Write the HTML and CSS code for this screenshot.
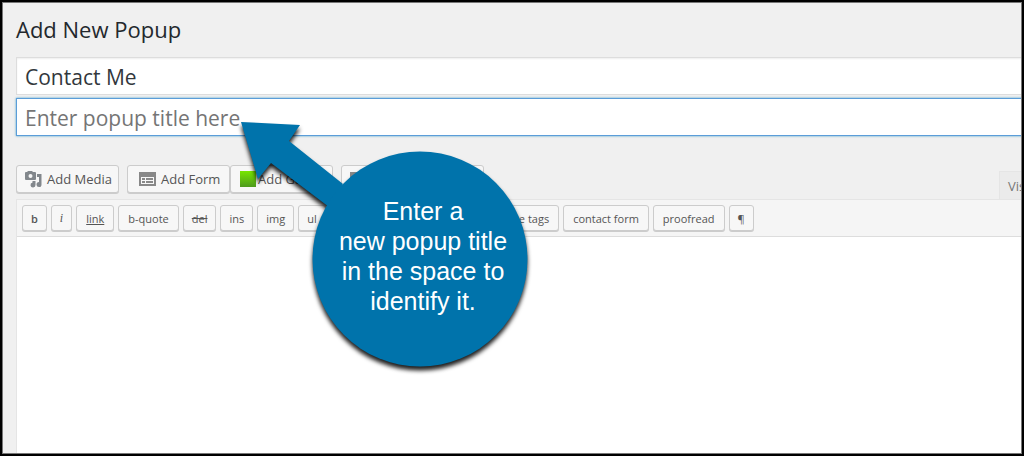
FILE: index.html
```html
<!DOCTYPE html>
<html lang="en">
<head>
<meta charset="utf-8">
<title>Add New Popup</title>
<link rel="stylesheet" href="styles.css">
</head>
<body>
<div class="frame">
  <main class="editor-page">
    <h1 class="page-title">Add New Popup</h1>
    <form class="popup-form">
      <input class="title-field" type="text" aria-label="Popup name" value="Contact Me">
      <input class="title-field title-field--active" type="text" aria-label="Popup title" placeholder="Enter popup title here">
      <div class="media-row">
        <div class="media-buttons">
          <button class="btn btn--media btn--spaced" type="button">
            <svg class="icon" viewBox="0 0 18 18" aria-hidden="true"><path fill="#82878c" fill-rule="evenodd" d="M2 2h1l1-1h4l1 1h2q1 0 1 1v6q0 1-1 1H2q-1 0-1-1V3q0-1 1-1zm4.500 2a2 2 0 1 0 0 4a2 2 0 1 0 0-4z"/><path fill="#82878c" d="M13 4h4.500v10.500a2.500 2.500 0 1 1-2.500-2.400V7h-2zM8.500 11h3v4a2.500 2.500 0 1 1-3-2.400z"/></svg>
            Add Media
          </button>
          <button class="btn btn--media btn--form" type="button">
            <svg class="icon" viewBox="0 0 18 18" aria-hidden="true"><path fill="#888" fill-rule="evenodd" d="M1 2h17v14H1zM3 7v7h13V7z"/><path fill="#888" d="M4 8h3v2H4zm4 0h7v2H8zM4 11h3v2H4zm4 0h7v2H8z"/></svg>
            Add Form
          </button>
          <button class="btn btn--media btn--chart btn--spaced" type="button">
            <span class="swatch"></span>Add Gallery
          </button>
          <button class="btn btn--media btn--wide" type="button">
            <svg class="icon" viewBox="0 0 18 18" aria-hidden="true"><path fill="#888" fill-rule="evenodd" d="M1 2h16v14H1zM3 7v7h12V7z"/></svg>
            Add Contact
          </button>
        </div>
        <button class="mode-tab" type="button">Visual</button>
      </div>
      <div class="editor">
        <div class="quicktags">
          <button class="btn btn--tag bold" type="button">b</button>
          <button class="btn btn--tag italic" type="button">i</button>
          <button class="btn btn--tag btn--roomy underline" type="button">link</button>
          <button class="btn btn--tag btn--roomy" type="button">b-quote</button>
          <button class="btn btn--tag strike" type="button">del</button>
          <button class="btn btn--tag" type="button">ins</button>
          <button class="btn btn--tag" type="button">img</button>
          <button class="btn btn--tag" type="button">ul</button>
          <button class="btn btn--tag" type="button">ol</button>
          <button class="btn btn--tag" type="button">li</button>
          <button class="btn btn--tag btn--roomy" type="button">code</button>
          <button class="btn btn--tag btn--roomy" type="button">more</button>
          <button class="btn btn--tag btn--roomy" type="button">close tags</button>
          <button class="btn btn--tag btn--roomy" type="button">contact form</button>
          <button class="btn btn--tag btn--roomy" type="button">proofread</button>
          <button class="btn btn--tag" type="button">¶</button>
        </div>
        <textarea class="content" aria-label="Popup content"></textarea>
      </div>
    </form>
  </main>
  <aside class="callout">
    <svg class="callout-shape" viewBox="0 0 300 260" aria-hidden="true"><path fill="#0073ab" d="M8 14L67 17L56 33L110 76L96 99L38 55L25 71Z"/><circle cx="187" cy="151" r="107.500" fill="#0073ab"/></svg>
    <p class="callout-text">Enter a<br>new popup title<br>in the space to<br>identify it.</p>
  </aside>
</div>
</body>
</html>
```

FILE: styles.css
```css
* { box-sizing: border-box; }

body {
  margin: 0;
  background: #f0f0f0;
  color: #23282d;
  font-family: "Open Sans", "Noto Sans", sans-serif;
}

.frame {
  position: relative;
  display: flex;
  min-height: 100vh;
  overflow: hidden;
  border: 2px solid #000;
}

.frame::after {
  content: "";
  position: absolute;
  inset: 0;
  border: 1px solid #777;
  pointer-events: none;
}

.editor-page {
  flex: 1;
  display: flex;
  flex-direction: column;
  margin-right: -8px;
  padding: 11px 0 0 14px;
}

.page-title {
  margin: 0 0 12px;
  font-size: 22px;
  font-weight: 400;
  line-height: 32px;
}

.popup-form {
  flex: 1;
  display: flex;
  flex-direction: column;
}

.title-field {
  width: 100%;
  height: 38px;
  margin: 0 0 3px;
  padding: 2px 8px 0;
  border: 1px solid #ddd;
  outline: 0;
  background: #fff;
  box-shadow: inset 0 1px 2px rgba(0, 0, 0, 0.07);
  color: #32373c;
  font: 400 21px/34px "Open Sans", "Noto Sans", sans-serif;
}

.title-field--active {
  border-color: #5b9dd9;
  box-shadow: 0 0 2px rgba(30, 140, 190, 0.8);
}

.title-field::placeholder { color: #757575; opacity: 1; }

.media-row {
  display: flex;
  justify-content: space-between;
  align-items: flex-end;
  margin-top: 26px;
}

.media-buttons {
  display: flex;
  padding-bottom: 6px;
}

.btn {
  flex: none;
  border: 1px solid #ccc;
  border-radius: 3px;
  background: #f7f7f7;
  box-shadow: 0 1px 0 #ccc;
  color: #555;
  font-family: "Open Sans", "Noto Sans", sans-serif;
  white-space: nowrap;
}

.btn--media {
  display: flex;
  align-items: center;
  gap: 5px;
  width: 103px;
  height: 28px;
  padding: 0 7px;
  overflow: hidden;
  font-size: 13px;
}

.btn--spaced { margin-right: 8px; }
.btn--form { padding-left: 10px; }
.btn--chart { gap: 2px; padding-left: 9px; }
.btn--wide { width: 143px; }

.icon {
  flex: none;
  width: 18px;
  height: 18px;
}

.swatch {
  flex: none;
  width: 16px;
  height: 16px;
  background: linear-gradient(#78e600, #4e9a1e);
}

.mode-tab {
  height: 28px;
  width: 31px;
  padding: 0 8px;
  overflow: hidden;
  border: 1px solid #e5e5e5;
  border-bottom: 0;
  background: #ebebeb;
  color: #777;
  font: 400 13px/20px "Open Sans", "Noto Sans", sans-serif;
}

.editor {
  flex: 1;
  display: flex;
  flex-direction: column;
  border: 1px solid #e5e5e5;
  border-bottom: 0;
}

.quicktags {
  display: flex;
  gap: 4px;
  padding: 5px;
  border-bottom: 1px solid #ddd;
  background: #f5f5f5;
}

.btn--tag {
  height: 26px;
  padding: 0 8px;
  font-size: 11px;
}

.btn--roomy { padding: 0 9px; }

.bold { font-weight: 600; }
.italic { font-style: italic; font-family: "Liberation Serif", serif; font-size: 12px; }
.underline { text-decoration: underline; }
.strike { text-decoration: line-through; }

.content {
  flex: 1;
  width: 100%;
  padding: 10px;
  border: 0;
  outline: 0;
  resize: none;
  background: #fff;
}

.callout {
  position: absolute;
  top: 106px;
  left: 231px;
  width: 300px;
  height: 260px;
}

.callout-shape {
  display: block;
  width: 100%;
  height: 100%;
  overflow: visible;
  filter: drop-shadow(0 4px 2px #000000e0);
}

.callout-text {
  position: absolute;
  top: 88px;
  left: 90px;
  width: 200px;
  margin: 0;
  color: #fff;
  font: 400 25px/30px "Liberation Sans", Arial, sans-serif;
  text-align: center;
}
```
